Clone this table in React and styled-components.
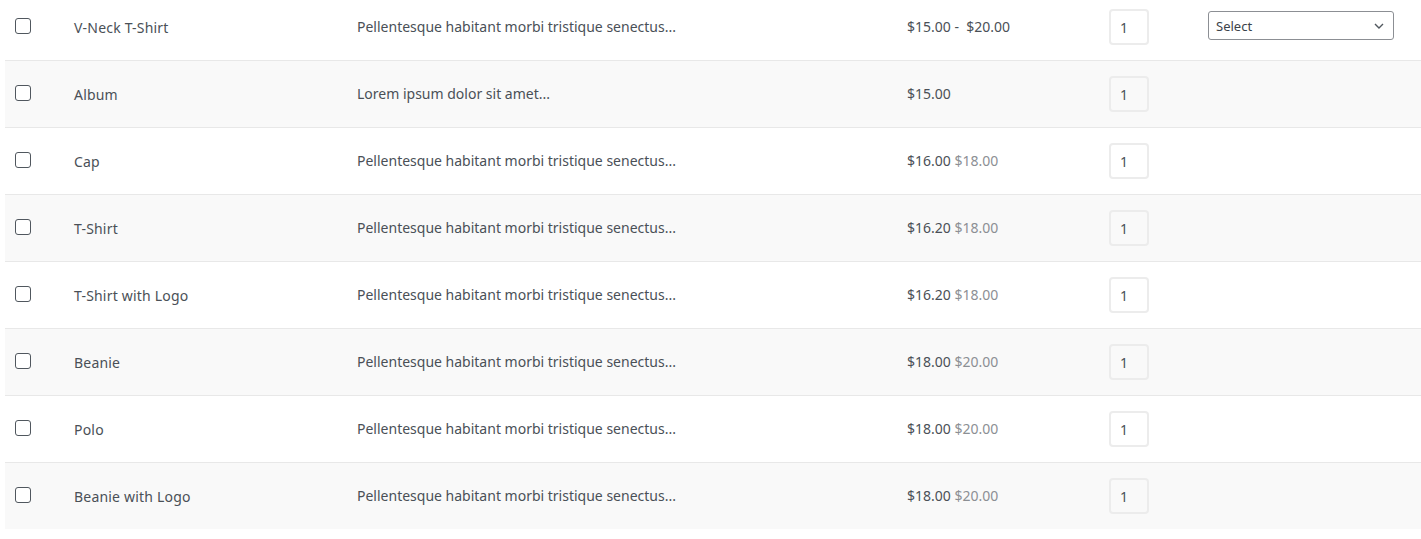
import React from "react";
import styled, { createGlobalStyle } from "styled-components";

const GlobalStyle = createGlobalStyle`
  body {
    margin: 0;
    background: #fff;
    font-family: "Noto Sans", "Open Sans", sans-serif;
    color: #4a5057;
  }
`;

const products = [
  { name: "V-Neck T-Shirt", desc: "Pellentesque habitant morbi tristique senectus...", price: "$15.00", to: "$20.00", variable: true },
  { name: "Album", desc: "Lorem ipsum dolor sit amet...", price: "$15.00" },
  { name: "Cap", desc: "Pellentesque habitant morbi tristique senectus...", price: "$16.00", regular: "$18.00" },
  { name: "T-Shirt", desc: "Pellentesque habitant morbi tristique senectus...", price: "$16.20", regular: "$18.00" },
  { name: "T-Shirt with Logo", desc: "Pellentesque habitant morbi tristique senectus...", price: "$16.20", regular: "$18.00" },
  { name: "Beanie", desc: "Pellentesque habitant morbi tristique senectus...", price: "$18.00", regular: "$20.00" },
  { name: "Polo", desc: "Pellentesque habitant morbi tristique senectus...", price: "$18.00", regular: "$20.00" },
  { name: "Beanie with Logo", desc: "Pellentesque habitant morbi tristique senectus...", price: "$18.00", regular: "$20.00" },
];

const Table = styled.div`
  margin-top: -6px;
  padding-left: 5px;
`;

const Row = styled.div`
  display: grid;
  grid-template-columns: 69px 283px 550px 202px 99px 186px 1fr;
  align-items: center;
  height: 66px;
  background: ${({ $striped }) => ($striped ? "#f9f9f9" : "#fff")};
  & + & {
    border-top: 1px solid #e8e8e8;
  }
`;

const CheckCell = styled.div`
  padding-left: 10px;
  display: flex;
  align-items: center;
  margin-top: -2px;
`;

const Checkbox = styled.span`
  display: block;
  width: 14px;
  height: 14px;
  border: 1px solid #50575e;
  border-radius: 3px;
  background: #fff;
`;

const Name = styled.div`
  font-size: 14px;
  letter-spacing: 0.2px;
`;

const Desc = styled.div`
  font-size: 14px;
  margin-top: -2px;
`;

const Price = styled.div`
  font-size: 14px;
  white-space: pre;
  margin-top: -1px;
`;

const Regular = styled.span`
  color: #8c8f94;
`;

const Qty = styled.div`
  box-sizing: content-box;
  width: 27px;
  height: 32px;
  padding-left: 9px;
  border: 2px solid #ececec;
  border-radius: 4px;
  font-size: 14px;
  display: flex;
  align-items: center;
`;

const Select = styled.div`
  height: 27px;
  margin-top: -3px;
  border: 1px solid #8c8f94;
  border-radius: 3px;
  background: #fff;
  font-size: 13px;
  display: flex;
  align-items: center;
  justify-content: space-between;
  padding: 0 9px 0 7px;
  color: #3c434a;
`;

const Chevron = () => (
  <svg width="10" height="6" viewBox="0 0 10 6">
    <path d="M1 1l4 4 4-4" fill="none" stroke="#50575e" strokeWidth="1.4" />
  </svg>
);

export default function App() {
  return (
    <>
      <GlobalStyle />
      <Table>
        {products.map((p, i) => (
          <Row key={p.name} $striped={i % 2 === 1}>
            <CheckCell>
              <Checkbox />
            </CheckCell>
            <Name>{p.name}</Name>
            <Desc>{p.desc}</Desc>
            <Price>
              {p.variable ? `${p.price} -  ${p.to}` : p.price}
              {p.regular && <Regular> {p.regular}</Regular>}
            </Price>
            <div>
              <Qty>1</Qty>
            </div>
            <div>
              {p.variable && (
                <Select>
                  <span>Select</span>
                  <Chevron />
                </Select>
              )}
            </div>
            <div />
          </Row>
        ))}
      </Table>
    </>
  );
}
